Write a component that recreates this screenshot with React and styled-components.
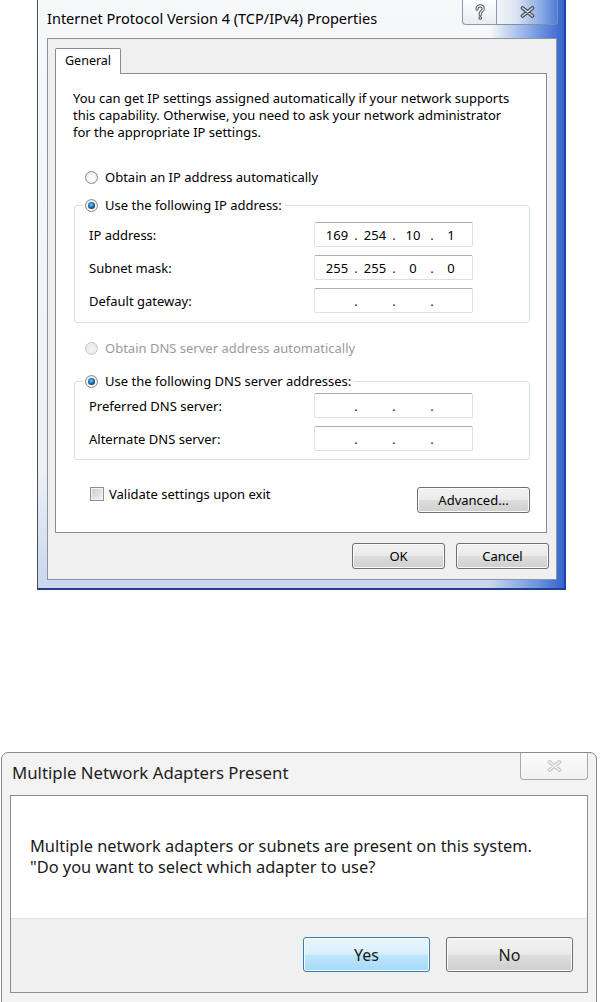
import React from 'react';
import styled, { createGlobalStyle } from 'styled-components';

const GlobalStyle = createGlobalStyle`
  html, body { margin: 0; padding: 0; background: #fff; }
  body { font-family: "Noto Sans", "Open Sans", sans-serif; color: #000; }
`;

const Page = styled.div`
  width: 602px;
  height: 1002px;
  overflow: hidden;
  display: flex;
  flex-direction: column;
`;

/* ---------- shared Win7 controls ---------- */

const Radio = styled.span`
  position: relative;
  flex: none;
  width: 13px;
  height: 13px;
  box-sizing: border-box;
  border-radius: 50%;
  border: 1px solid ${p => (p.$disabled ? '#c9c9c9' : '#8a8a8a')};
  background: ${p =>
    p.$disabled
      ? 'radial-gradient(circle at 50% 60%, #f6f6f6, #e2e2e2)'
      : 'radial-gradient(circle at 50% 60%, #fdfdfd 30%, #d6d6d6)'};

  &::after {
    content: '';
    display: ${p => (p.$checked ? 'block' : 'none')};
    position: absolute;
    left: 2px;
    top: 2px;
    width: 7px;
    height: 7px;
    border-radius: 50%;
    background: radial-gradient(circle at 45% 40%, #8fd6ff 0, #2a7fc0 35%, #0c3a63 75%, #0a2440 100%);
  }
`;

const Checkbox = styled.span`
  flex: none;
  width: 14px;
  height: 14px;
  box-sizing: border-box;
  border: 1px solid #8e8f8f;
  background: linear-gradient(135deg, #cbcbcb, #f4f4f4);
  box-shadow: inset 0 0 0 1px #f4f4f4;
`;

const Button = styled.button`
  width: ${p => p.$w}px;
  height: 26px;
  margin: ${p => p.$mt || 0}px 0 0 0;
  padding: 0;
  box-sizing: border-box;
  border: 1px solid #707070;
  border-radius: 3px;
  background: linear-gradient(#f2f2f2 0%, #ebebeb 48%, #dddddd 52%, #cfcfcf 100%);
  box-shadow: inset 0 0 0 1px #fbfbfb;
  font-family: inherit;
  font-size: 13px;
  color: #000;
`;

/* ---------- TCP/IPv4 properties dialog ---------- */

const Window = styled.div`
  margin-left: 37px;
  width: 529px;
  height: 590px;
  box-sizing: border-box;
  border-left: 1px solid #4b4f57;
  border-right: 2px solid #1d44a6;
  border-bottom: 2px solid #213f8c;
  background:
    linear-gradient(to right, rgba(255,255,255,0) 0%, rgba(255,255,255,0) 86%, rgba(92,136,222,0.85) 95%, #3563cf 100%),
    linear-gradient(#f7f8fa, #eef1f5 80%, #c9d6ee);
  padding: 0 7px 8px 9px;
  display: flex;
  flex-direction: column;
`;

const TitleBar = styled.div`
  height: 38px;
  flex: none;
  display: flex;
  align-items: flex-start;
`;

const Title = styled.div`
  flex: 1;
  font-size: 14.5px;
  line-height: 36px;
  color: #000;
  white-space: nowrap;
`;

const CaptionButtons = styled.div`
  display: flex;
  margin-right: -1px;
`;

const HelpButton = styled.div`
  width: 35px;
  height: 25px;
  box-sizing: border-box;
  border: 1px solid #8d98a8;
  border-top: none;
  border-radius: 0 0 0 4px;
  background: linear-gradient(#fdfdfe, #e9edf2);
  display: flex;
  align-items: center;
  justify-content: center;
`;

const CloseButton = styled.div`
  width: 61px;
  height: 25px;
  box-sizing: border-box;
  border: 1px solid #7f90ab;
  border-top: none;
  border-left: none;
  border-radius: 0 0 4px 0;
  background: linear-gradient(to right, #f1f4f8 0%, #dfe6f1 30%, #88a8e4 75%, #4d7cd9 100%);
  display: flex;
  align-items: center;
  justify-content: center;
`;

const Client = styled.div`
  flex: 1;
  border: 1px solid #8b939f;
  background: #f0f0f0;
  padding: 9px 8px 10px 7px;
  display: flex;
  flex-direction: column;
`;

const Tab = styled.div`
  align-self: flex-start;
  height: 26px;
  box-sizing: border-box;
  border: 1px solid #898c95;
  border-bottom: none;
  border-radius: 2px 2px 0 0;
  background: #fff;
  padding: 0 9px;
  font-size: 12.5px;
  line-height: 24px;
  margin-bottom: -1px;
  position: relative;
  z-index: 1;
`;

const TabPanel = styled.div`
  height: 460px;
  margin-right: 1px;
  box-sizing: border-box;
  border: 1px solid #898c95;
  background: #fff;
  padding: 16px 16px 0 17px;
  display: flex;
  flex-direction: column;
`;

const Intro = styled.p`
  margin: 0;
  font-size: 13px;
  line-height: 17px;
  white-space: nowrap;
`;

const Option = styled.div`
  display: flex;
  align-items: center;
  gap: 7px;
  height: 20px;
  margin-top: ${p => p.$mt || 0}px;
  margin-left: ${p => p.$ml ?? 12}px;
  font-size: 13px;
  color: ${p => (p.$disabled ? '#9a9a9a' : '#000')};
  white-space: nowrap;
`;

const Group = styled.fieldset`
  margin: ${p => p.$mt}px 0 0 1px;
  width: 456px;
  box-sizing: border-box;
  border: 1px solid #d5dfe5;
  border-radius: 3px;
  padding: 0 0 ${p => p.$pb}px 8px;
  min-width: 0;
`;

const Legend = styled.legend`
  padding: 0 3px 0 2px;
  height: 20px;
`;

const FieldRow = styled.div`
  display: grid;
  grid-template-columns: 225px 159px;
  align-items: center;
  padding-left: 6px;
  margin-top: ${p => p.$mt}px;
  font-size: 13px;
`;

const IpBox = styled.div`
  height: 25px;
  box-sizing: border-box;
  border: 1px solid #dbdfe6;
  border-top-color: #abadb3;
  border-radius: 2px;
  background: #fff;
  display: flex;
  align-items: center;
  padding-left: 4px;
  font-size: 13px;
`;

const Octet = styled.span`
  width: 36px;
  text-align: center;
`;

const Dot = styled.span`
  width: 2px;
  display: flex;
  justify-content: center;
  color: #1a1a40;
`;

const BottomRow = styled.div`
  margin: 25px 0 0 1px;
  width: 456px;
  display: flex;
  justify-content: space-between;
  align-items: flex-start;
`;

const CheckLabel = styled.label`
  display: flex;
  align-items: center;
  gap: 5px;
  height: 17px;
  margin-left: 16px;
  font-size: 13px;
`;

const ButtonBar = styled.div`
  display: flex;
  justify-content: flex-end;
  gap: 11px;
  margin-top: 10px;
  margin-right: -1px;
`;

/* ---------- Multiple adapters message box ---------- */

const MsgWindow = styled.div`
  margin: 162px 0 0 1px;
  width: 596px;
  height: 251px;
  flex: none;
  box-sizing: border-box;
  border: 1px solid #8a8a8a;
  border-radius: 7px 7px 0 0;
  background: #f3f3f3;
  padding: 0 8px 9px 8px;
  display: flex;
  flex-direction: column;
`;

const MsgTitleBar = styled.div`
  height: 42px;
  flex: none;
  display: flex;
  align-items: flex-start;
`;

const MsgTitle = styled.div`
  flex: 1;
  padding-left: 2px;
  font-size: 16.8px;
  line-height: 40px;
  color: #1e1e1e;
  white-space: nowrap;
`;

const MsgClose = styled.div`
  width: 68px;
  height: 27px;
  box-sizing: border-box;
  border: 1px solid #a9a9a9;
  border-top: none;
  border-radius: 0 0 4px 4px;
  background: linear-gradient(#fbfbfb, #f1f1f1);
  display: flex;
  align-items: center;
  justify-content: center;
`;

const MsgClient = styled.div`
  flex: 1;
  border: 1px solid #8d8d8d;
  background: #fff;
  display: flex;
  flex-direction: column;
`;

const MsgText = styled.p`
  margin: 0;
  height: 122px;
  box-sizing: border-box;
  padding: 39px 0 0 19px;
  font-size: 16.4px;
  line-height: 21px;
  color: #1a1a1a;
  white-space: nowrap;
`;

const MsgFooter = styled.div`
  flex: 1;
  background: #f0f0f0;
  border-top: 1px solid #e2e2e2;
  display: flex;
  justify-content: flex-end;
  gap: 16px;
  padding: 18px 14px 0 0;
`;

const MsgButton = styled.button`
  width: 127px;
  height: 35px;
  margin: 0;
  box-sizing: border-box;
  border: 1px solid ${p => (p.$focused ? '#3c7fb1' : '#707070')};
  border-radius: 3px;
  background: ${p =>
    p.$focused
      ? 'linear-gradient(#eaf6fd 0%, #d9f0fc 48%, #bee6fd 52%, #a7d9f5 100%)'
      : 'linear-gradient(#f2f2f2 0%, #ebebeb 48%, #dddddd 52%, #cfcfcf 100%)'};
  box-shadow: inset 0 0 0 1px ${p => (p.$focused ? '#f4fbff' : '#fbfbfb')};
  font-family: inherit;
  font-size: 16px;
  color: #1a1a1a;
`;

/* ---------- icons ---------- */

const HelpGlyph = () => (
  <svg width="12" height="17" viewBox="0 0 12 17">
    <path d="M3 5.2 C3 2.8 4.5 1.8 6 1.8 C8 1.8 9.2 3.1 9.2 4.7 C9.2 7 6.2 7.4 6.2 10 V10.8"
      fill="none" stroke="#4e5560" strokeWidth="3.2" strokeLinecap="round" />
    <path d="M3 5.2 C3 2.8 4.5 1.8 6 1.8 C8 1.8 9.2 3.1 9.2 4.7 C9.2 7 6.2 7.4 6.2 10 V10.8"
      fill="none" stroke="#fff" strokeWidth="1.2" strokeLinecap="round" />
    <circle cx="6.2" cy="14" r="1.8" fill="#4e5560" />
    <circle cx="6.2" cy="14" r="0.7" fill="#fff" />
  </svg>
);

const CloseGlyph = ({ dim }) => (
  <svg width="15" height="12" viewBox="0 0 15 12">
    <path d="M2.5 2 L12.5 10 M12.5 2 L2.5 10" fill="none"
      stroke={dim ? '#c6c6c6' : '#454c57'} strokeWidth="3.6" strokeLinecap="round" />
    <path d="M2.5 2 L12.5 10 M12.5 2 L2.5 10" fill="none"
      stroke={dim ? '#f6f6f6' : '#d7dde6'} strokeWidth="1.4" strokeLinecap="round" />
  </svg>
);

const IpField = ({ value = ['', '', '', ''] }) => (
  <IpBox>
    {value.map((v, i) => (
      <React.Fragment key={i}>
        {i > 0 && <Dot>.</Dot>}
        <Octet>{v}</Octet>
      </React.Fragment>
    ))}
  </IpBox>
);

export default function App() {
  return (
    <Page>
      <GlobalStyle />

      <Window>
        <TitleBar>
          <Title>Internet Protocol Version 4 (TCP/IPv4) Properties</Title>
          <CaptionButtons>
            <HelpButton><HelpGlyph /></HelpButton>
            <CloseButton><CloseGlyph /></CloseButton>
          </CaptionButtons>
        </TitleBar>

        <Client>
          <Tab>General</Tab>
          <TabPanel>
            <Intro>
              You can get IP settings assigned automatically if your network supports<br />
              this capability. Otherwise, you need to ask your network administrator<br />
              for the appropriate IP settings.
            </Intro>

            <Option $mt={26}><Radio />Obtain an IP address automatically</Option>

            <Group $mt={8} $pb={9}>
              <Legend>
                <Option $ml={0}><Radio $checked />Use the following IP address:</Option>
              </Legend>
              <FieldRow $mt={7}>
                <span>IP address:</span>
                <IpField value={['169', '254', '10', '1']} />
              </FieldRow>
              <FieldRow $mt={8}>
                <span>Subnet mask:</span>
                <IpField value={['255', '255', '0', '0']} />
              </FieldRow>
              <FieldRow $mt={8}>
                <span>Default gateway:</span>
                <IpField />
              </FieldRow>
            </Group>

            <Option $mt={15} $disabled><Radio $disabled />Obtain DNS server address automatically</Option>

            <Group $mt={13} $pb={8}>
              <Legend>
                <Option $ml={0}><Radio $checked />Use the following DNS server addresses:</Option>
              </Legend>
              <FieldRow $mt={2}>
                <span>Preferred DNS server:</span>
                <IpField />
              </FieldRow>
              <FieldRow $mt={8}>
                <span>Alternate DNS server:</span>
                <IpField />
              </FieldRow>
            </Group>

            <BottomRow>
              <CheckLabel><Checkbox />Validate settings upon exit</CheckLabel>
              <Button $w={113} $mt={2}>Advanced...</Button>
            </BottomRow>
          </TabPanel>

          <ButtonBar>
            <Button $w={93}>OK</Button>
            <Button $w={93}>Cancel</Button>
          </ButtonBar>
        </Client>
      </Window>

      <MsgWindow>
        <MsgTitleBar>
          <MsgTitle>Multiple Network Adapters Present</MsgTitle>
          <MsgClose><CloseGlyph dim /></MsgClose>
        </MsgTitleBar>
        <MsgClient>
          <MsgText>
            Multiple network adapters or subnets are present on this system.<br />
            "Do you want to select which adapter to use?
          </MsgText>
          <MsgFooter>
            <MsgButton $focused>Yes</MsgButton>
            <MsgButton>No</MsgButton>
          </MsgFooter>
        </MsgClient>
      </MsgWindow>
    </Page>
  );
}
